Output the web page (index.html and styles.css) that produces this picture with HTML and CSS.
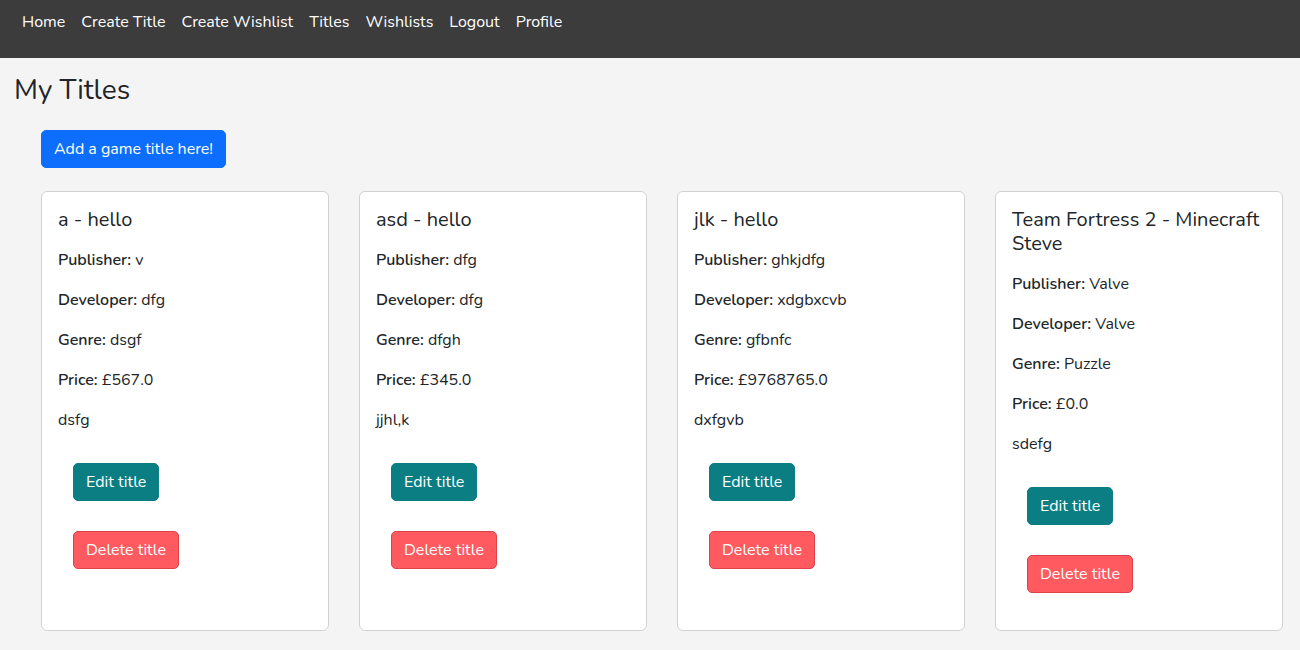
FILE: index.html
```html
<!DOCTYPE html>
<html lang="en">
<head>
<meta charset="utf-8">
<title>My Titles</title>
<link rel="stylesheet" href="styles.css">
</head>
<body>
<nav class="navbar">
  <a href="#">Home</a>
  <a href="#">Create Title</a>
  <a href="#">Create Wishlist</a>
  <a href="#">Titles</a>
  <a href="#">Wishlists</a>
  <a href="#">Logout</a>
  <a href="#">Profile</a>
</nav>
<h1 class="page-title">My Titles</h1>
<main class="content">
  <div class="add-row"><a class="btn btn-primary" href="#">Add a game title here!</a></div>
  <div class="cards">
    <div class="card">
      <h2 class="card-title">a - hello</h2>
      <p><b>Publisher:</b> v</p>
      <p><b>Developer:</b> dfg</p>
      <p><b>Genre:</b> dsgf</p>
      <p><b>Price:</b> £567.0</p>
      <p>dsfg</p>
      <div class="actions">
        <a class="btn btn-edit" href="#">Edit title</a>
        <a class="btn btn-delete" href="#">Delete title</a>
      </div>
    </div>
    <div class="card">
      <h2 class="card-title">asd - hello</h2>
      <p><b>Publisher:</b> dfg</p>
      <p><b>Developer:</b> dfg</p>
      <p><b>Genre:</b> dfgh</p>
      <p><b>Price:</b> £345.0</p>
      <p>jjhl,k</p>
      <div class="actions">
        <a class="btn btn-edit" href="#">Edit title</a>
        <a class="btn btn-delete" href="#">Delete title</a>
      </div>
    </div>
    <div class="card">
      <h2 class="card-title">jlk - hello</h2>
      <p><b>Publisher:</b> ghkjdfg</p>
      <p><b>Developer:</b> xdgbxcvb</p>
      <p><b>Genre:</b> gfbnfc</p>
      <p><b>Price:</b> £9768765.0</p>
      <p>dxfgvb</p>
      <div class="actions">
        <a class="btn btn-edit" href="#">Edit title</a>
        <a class="btn btn-delete" href="#">Delete title</a>
      </div>
    </div>
    <div class="card">
      <h2 class="card-title">Team Fortress 2 - Minecraft Steve</h2>
      <p><b>Publisher:</b> Valve</p>
      <p><b>Developer:</b> Valve</p>
      <p><b>Genre:</b> Puzzle</p>
      <p><b>Price:</b> £0.0</p>
      <p>sdefg</p>
      <div class="actions">
        <a class="btn btn-edit" href="#">Edit title</a>
        <a class="btn btn-delete" href="#">Delete title</a>
      </div>
    </div>
  </div>
</main>
</body>
</html>
```
FILE: styles.css
```css
* { box-sizing: border-box; }
body {
  margin: 0;
  background: #f4f4f4;
  color: #212529;
  font-family: "Nunito", Lato, "Open Sans", sans-serif;
  font-size: 16px;
  line-height: 24px;
}
.navbar {
  height: 58px;
  background: #3c3c3c;
  display: flex;
  align-items: flex-start;
  padding: 10px 14px 0;
}
.navbar a {
  color: #ffffff;
  text-decoration: none;
  padding: 0 8px;
  line-height: 24px;
}
.page-title {
  margin: 14px 0 0 14px;
  font-size: 28px;
  line-height: 36px;
  font-weight: 400;
}
.content {
  padding: 0 17px 0 41px;
}
.add-row {
  margin-top: 22px;
  display: flex;
}
.btn {
  display: inline-block;
  text-decoration: none;
  color: #fff;
  padding: 7px 12px;
  line-height: 22px;
  border: 1px solid transparent;
  border-radius: 5px;
  font-size: 16px;
}
.btn-primary { background: #0d6efd; border-color: #0d6efd; }
.btn-edit { background: #0a7e83; border-color: #0a7e83; }
.btn-delete { background: #fe5a60; border-color: #e0404a; }
.cards {
  margin-top: 23px;
  display: grid;
  grid-template-columns: repeat(4, 288px);
  gap: 30px;
}
.card {
  background: #fff;
  border: 1px solid #d2d2d2;
  border-radius: 6px;
  padding: 16px 16px 16px;
  min-height: 440px;
}
.card-title {
  margin: 0 0 16px;
  font-size: 20px;
  line-height: 24px;
  font-weight: 400;
}
.card p {
  margin: 0 0 16px;
}
.card b { font-weight: 600; }
.actions {
  margin: 0 0 21px 15px;
  padding-top: 15px;
  display: flex;
  flex-direction: column;
  align-items: flex-start;
  gap: 30px;
}
```
